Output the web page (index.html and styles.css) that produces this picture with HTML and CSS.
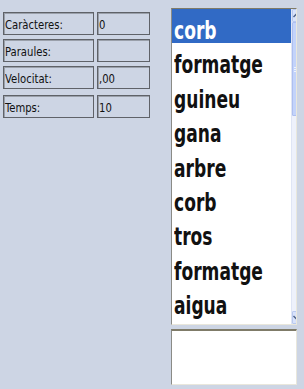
FILE: index.html
```html
<!DOCTYPE html>
<html lang="ca">
<head>
  <meta charset="UTF-8">
  <title>Mecanografia</title>
  <link rel="stylesheet" href="styles.css">
</head>
<body>
  <div class="page">
    <div class="stats">
      <div class="stat">
        <div class="label"><span>Caràcteres:</span></div>
        <div class="value"><span>0</span></div>
      </div>
      <div class="stat">
        <div class="label"><span>Paraules:</span></div>
        <div class="value"></div>
      </div>
      <div class="stat">
        <div class="label"><span>Velocitat:</span></div>
        <div class="value"><span>,00</span></div>
      </div>
      <div class="stat last">
        <div class="label"><span>Temps:</span></div>
        <div class="value"><span>10</span></div>
      </div>
    </div>
    <div class="side">
      <div class="words">
        <ul class="word-list">
          <li class="selected"><span>corb</span></li>
          <li><span>formatge</span></li>
          <li><span>guineu</span></li>
          <li><span>gana</span></li>
          <li><span>arbre</span></li>
          <li><span>corb</span></li>
          <li><span>tros</span></li>
          <li><span>formatge</span></li>
          <li><span>aigua</span></li>
        </ul>
        <div class="scrollbar">
          <div class="arrow up">
            <svg width="7" height="5" viewBox="0 0 7 5"><path d="M0.5 4 L3.5 1 L6.5 4" fill="none" stroke="#4d6185" stroke-width="1.4"/></svg>
          </div>
          <div class="thumb"><span></span><span></span><span></span></div>
          <div class="track"></div>
          <div class="arrow down">
            <svg width="7" height="5" viewBox="0 0 7 5"><path d="M0.5 1 L3.5 4 L6.5 1" fill="none" stroke="#4d6185" stroke-width="1.4"/></svg>
          </div>
        </div>
      </div>
      <div class="answer"></div>
    </div>
  </div>
</body>
</html>
```

FILE: styles.css
```css
body {
  margin: 0;
  background: #cdd5e4;
  font-family: "DejaVu Sans Condensed", "DejaVu Sans", sans-serif;
  color: #111;
}
.page {
  display: flex;
  height: 389px;
}
.stats {
  padding: 12px 0 0 3px;
  display: flex;
  flex-direction: column;
  gap: 4px;
}
.stat {
  display: flex;
  gap: 3px;
}
.stat.last {
  margin-top: 2px;
}
.label, .value {
  height: 21px;
  border: 1px solid #5f6268;
  box-shadow: inset 1px 1px 0 #9aa0aa;
  font-size: 13px;
  line-height: 23px;
  padding-left: 1px;
  box-sizing: content-box;
  white-space: nowrap;
}
.label span, .value span {
  display: inline-block;
  transform: scaleX(0.86);
  transform-origin: left;
}
.label {
  width: 88px;
}
.value {
  width: 50px;
}
.side {
  margin: 8px 7px 0 auto;
  width: 126px;
  display: flex;
  flex-direction: column;
  gap: 4px;
}
.words {
  height: 317px;
  box-sizing: border-box;
  background: #fff;
  border-top: 1px solid #7f7b68;
  border-left: 1px solid #8b8b86;
  border-right: 1px solid #e9e7dc;
  border-bottom: 1px solid #e9e7dc;
  display: flex;
  overflow: hidden;
}
.word-list {
  flex: 1;
  list-style: none;
  margin: 0;
  padding: 0;
  font-weight: bold;
  font-size: 25px;
  white-space: nowrap;
}
.word-list li {
  height: 34.4px;
  box-sizing: border-box;
  padding: 10px 0 0 2px;
  line-height: 24px;
}
.word-list span {
  display: inline-block;
  transform: scaleX(0.76);
  transform-origin: left;
}
.word-list .selected {
  background: #316ac5;
  color: #fff;
}
.scrollbar {
  width: 9px;
  display: flex;
  flex-direction: column;
  background: #eef1fb;
  border-left: 1px solid #dfe5f5;
}
.arrow {
  height: 11px;
  display: flex;
  align-items: center;
  justify-content: center;
  background: #d8e2fb;
  border: 1px solid #b9c9ef;
  border-radius: 1px;
}
.thumb {
  height: 92px;
  background: #c3d3fa;
  border: 1px solid #aebff0;
  border-radius: 1px;
  display: flex;
  flex-direction: column;
  justify-content: center;
  align-items: center;
  gap: 1px;
}
.thumb span {
  width: 5px;
  height: 1px;
  background: #eef3ff;
}
.track {
  flex: 1;
}
.answer {
  height: 56px;
  box-sizing: border-box;
  background: #fff;
  border-top: 2px solid #7f7b68;
  border-left: 1px solid #8b8b86;
  border-right: 1px solid #e9e7dc;
  border-bottom: 1px solid #e9e7dc;
}
```
